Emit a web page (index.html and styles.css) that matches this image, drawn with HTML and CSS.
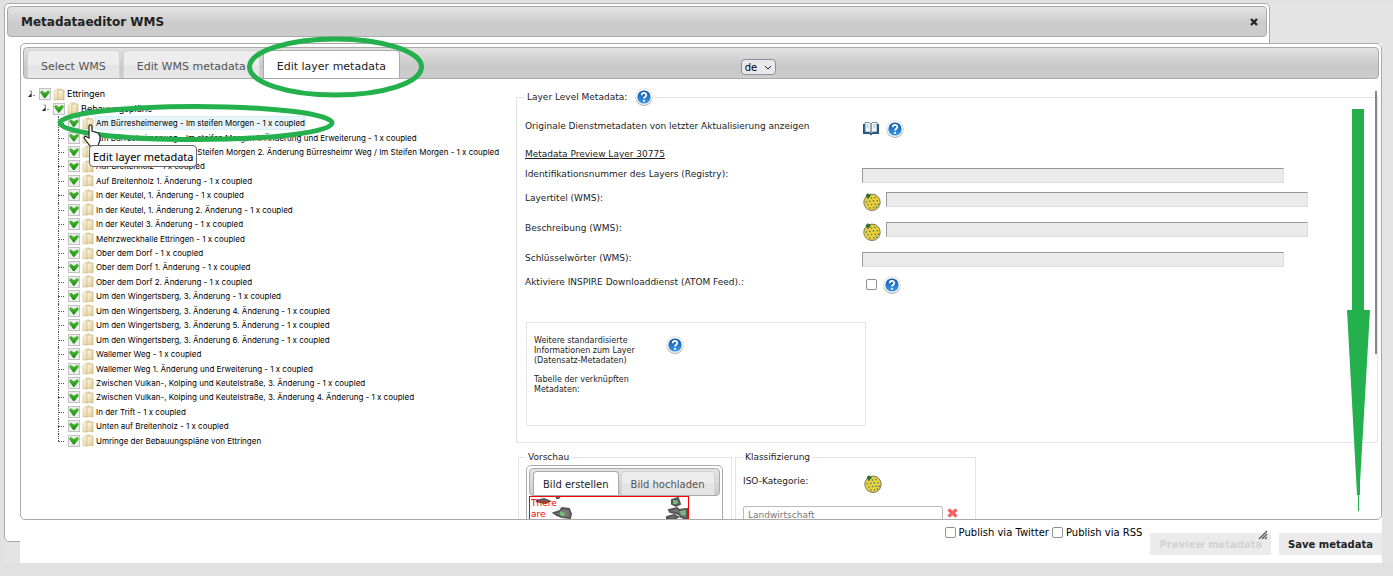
FILE: index.html
```html
<!DOCTYPE html>
<html lang="de">
<head>
<meta charset="utf-8">
<title>Metadataeditor WMS</title>
<link rel="stylesheet" href="styles.css">
</head>
<body>
<svg class="defs" aria-hidden="true">
  <defs>
    <linearGradient id="blue" x1="0" y1="0" x2="0" y2="1"><stop offset="0" stop-color="#0c55a8"/><stop offset="1" stop-color="#3f9aea"/></linearGradient>
    <linearGradient id="paper" x1="0" y1="0" x2="1" y2="1"><stop offset="0" stop-color="#fffbea"/><stop offset="1" stop-color="#dcc78f"/></linearGradient>
    <symbol id="help" viewBox="0 0 18 18">
      <circle cx="9" cy="9.4" r="8.5" fill="#aaa"/><circle cx="9" cy="8.8" r="8.5" fill="#dedede"/><circle cx="9" cy="8.8" r="7.8" fill="#f6f6f6"/>
      <circle cx="9" cy="9" r="6.6" fill="url(#blue)"/>
      <path d="M6.7 7.2C6.7 4.2 11.4 4.3 11.3 7C11.3 8.7 9 8.8 9 10.6" fill="none" stroke="#fff" stroke-width="1.8"/><circle cx="9" cy="12.8" r="1.1" fill="#fff"/>
    </symbol>
    <symbol id="book" viewBox="0 0 18 16">
      <path d="M1 3H17V13H10.5L9 14.5L7.5 13H1Z" fill="#245179"/>
      <path d="M3 1.5H7.5L9 3L10.5 1.5H15V11H10.5L9 12.5L7.5 11H3Z" fill="#f1f3f5" stroke="#547a98" stroke-width=".8"/>
      <path d="M9 3V12" stroke="#48718f" stroke-width="1.2"/><path d="M4.5 4H6.5M4.5 6H6.5M11.5 4H13.5M11.5 6H13.5" stroke="#aab5bd"/>
    </symbol>
    <symbol id="globe" viewBox="0 0 18 18">
      <circle cx="9" cy="9.3" r="8.2" fill="#edcf38" stroke="#77775c" stroke-width="1"/>
      <g fill="#3b7a7e"><circle cx="5" cy="5.4" r=".8"/><circle cx="8.5" cy="5" r=".8"/><circle cx="12" cy="4.5" r=".8"/><circle cx="3.4" cy="9" r=".8"/><circle cx="6.8" cy="8.4" r=".8"/><circle cx="10.4" cy="7.9" r=".8"/><circle cx="14.2" cy="7.8" r=".8"/><circle cx="5" cy="12" r=".8"/><circle cx="8.6" cy="11.5" r=".8"/><circle cx="12.2" cy="11.2" r=".8"/><circle cx="15.2" cy="11.4" r=".8"/><circle cx="7" cy="15" r=".8"/><circle cx="10.6" cy="14.7" r=".8"/><circle cx="13.4" cy="14" r=".8"/></g>
      <path d="M3 2L5 0L6 2L8 1L7 4L5 5L3 4Z" fill="#2c6b2b"/>
    </symbol>
    <symbol id="folder" viewBox="0 0 12 13">
      <path d="M1 4L4 1H8V10L5 12H1Z" fill="url(#paper)" stroke="#d7c38f" stroke-width=".7"/><path d="M5 2H11V12L7 11L5 12Z" fill="url(#paper)" stroke="#c9b37d" stroke-width=".7"/>
    </symbol>
    <symbol id="open" viewBox="0 0 8 9"><path d="M4.500 3V7H1Z" fill="#222"/><path d="M2.500 1H4.500V7M6 5.500H8" fill="none" stroke="#777" stroke-width=".8"/></symbol>
  </defs>
</svg>

<div class="page">
  <section class="dialog">
    <header class="titlebar"><h1>Metadataeditor WMS</h1>
      <button class="close" type="button" aria-label="Close"><svg viewBox="0 0 8 8" width="8" height="8"><path d="M1 1L7 7M7 1L1 7" stroke="#222" stroke-width="2.3"/></svg></button>
    </header>
    <main class="content">
      <div class="tabs">
        <nav class="tabbar">
          <a class="tab" href="#select">Select WMS</a>
          <a class="tab" href="#wms">Edit WMS metadata</a>
          <a class="tab active" href="#layer">Edit layer metadata</a>
          <select class="lang" aria-label="Language"><option>de</option></select>
        </nav>
        <div class="panel">
          <ul class="tree">
            <li class="l1"><svg class="arrow"><use href="#open"/></svg><label><input type="checkbox" checked><svg class="folder"><use href="#folder"/></svg><span>Ettringen</span></label></li>
            <li class="l2"><svg class="arrow"><use href="#open"/></svg><label><input type="checkbox" checked><svg class="folder"><use href="#folder"/></svg><span>Bebauungspläne</span></label></li>
            <li class="l3 hover"><label><input type="checkbox" checked><svg class="folder"><use href="#folder"/></svg><span>Am Bürresheimerweg - Im steifen Morgen - 1 x coupled</span></label></li>
            <li class="l3"><label><input type="checkbox" checked><svg class="folder"><use href="#folder"/></svg><span>Am Bürresheimerweg - Im steifen Morgen 1. Änderung und Erweiterung - 1 x coupled</span></label></li>
            <li class="l3"><label><input type="checkbox" checked><svg class="folder"><use href="#folder"/></svg><span>Am Bürresheimerweg - Im Steifen Morgen 2. Änderung Bürresheimr Weg / Im Steifen Morgen - 1 x coupled</span></label></li>
            <li class="l3"><label><input type="checkbox" checked><svg class="folder"><use href="#folder"/></svg><span>Auf Breitenholz - 1 x coupled</span></label></li>
            <li class="l3"><label><input type="checkbox" checked><svg class="folder"><use href="#folder"/></svg><span>Auf Breitenholz 1. Änderung - 1 x coupled</span></label></li>
            <li class="l3"><label><input type="checkbox" checked><svg class="folder"><use href="#folder"/></svg><span>In der Keutel, 1. Änderung - 1 x coupled</span></label></li>
            <li class="l3"><label><input type="checkbox" checked><svg class="folder"><use href="#folder"/></svg><span>In der Keutel, 1. Änderung 2. Änderung - 1 x coupled</span></label></li>
            <li class="l3"><label><input type="checkbox" checked><svg class="folder"><use href="#folder"/></svg><span>In der Keutel 3. Änderung - 1 x coupled</span></label></li>
            <li class="l3"><label><input type="checkbox" checked><svg class="folder"><use href="#folder"/></svg><span>Mehrzweckhalle Ettringen - 1 x coupled</span></label></li>
            <li class="l3"><label><input type="checkbox" checked><svg class="folder"><use href="#folder"/></svg><span>Ober dem Dorf - 1 x coupled</span></label></li>
            <li class="l3"><label><input type="checkbox" checked><svg class="folder"><use href="#folder"/></svg><span>Ober dem Dorf 1. Änderung - 1 x coupled</span></label></li>
            <li class="l3"><label><input type="checkbox" checked><svg class="folder"><use href="#folder"/></svg><span>Ober dem Dorf 2. Änderung - 1 x coupled</span></label></li>
            <li class="l3"><label><input type="checkbox" checked><svg class="folder"><use href="#folder"/></svg><span>Um den Wingertsberg, 3. Änderung - 1 x coupled</span></label></li>
            <li class="l3"><label><input type="checkbox" checked><svg class="folder"><use href="#folder"/></svg><span>Um den Wingertsberg, 3. Änderung 4. Änderung - 1 x coupled</span></label></li>
            <li class="l3"><label><input type="checkbox" checked><svg class="folder"><use href="#folder"/></svg><span>Um den Wingertsberg, 3. Änderung 5. Änderung - 1 x coupled</span></label></li>
            <li class="l3"><label><input type="checkbox" checked><svg class="folder"><use href="#folder"/></svg><span>Um den Wingertsberg, 3. Änderung 6. Änderung - 1 x coupled</span></label></li>
            <li class="l3"><label><input type="checkbox" checked><svg class="folder"><use href="#folder"/></svg><span>Wallemer Weg - 1 x coupled</span></label></li>
            <li class="l3"><label><input type="checkbox" checked><svg class="folder"><use href="#folder"/></svg><span>Wallemer Weg 1. Änderung und Erweiterung - 1 x coupled</span></label></li>
            <li class="l3"><label><input type="checkbox" checked><svg class="folder"><use href="#folder"/></svg><span>Zwischen Vulkan-, Kolping und Keutelstraße, 3. Änderung - 1 x coupled</span></label></li>
            <li class="l3"><label><input type="checkbox" checked><svg class="folder"><use href="#folder"/></svg><span>Zwischen Vulkan-, Kolping und Keutelstraße, 3. Änderung 4. Änderung - 1 x coupled</span></label></li>
            <li class="l3"><label><input type="checkbox" checked><svg class="folder"><use href="#folder"/></svg><span>In der Trift - 1 x coupled</span></label></li>
            <li class="l3"><label><input type="checkbox" checked><svg class="folder"><use href="#folder"/></svg><span>Unten auf Breitenholz - 1 x coupled</span></label></li>
            <li class="l3 last"><label><input type="checkbox" checked><svg class="folder"><use href="#folder"/></svg><span>Umringe der Bebauungspläne von Ettringen</span></label></li>
          </ul>
          <form class="form">
            <fieldset class="layer">
              <legend>Layer Level Metadata: <svg class="icon"><use href="#help"/></svg></legend>
              <div class="row original"><span>Originale Dienstmetadaten von letzter Aktualisierung anzeigen</span><div class="ctl"><svg class="icon"><use href="#book"/></svg><svg class="icon"><use href="#help"/></svg></div></div>
              <div class="row preview"><a href="#preview">Metadata Preview Layer 30775</a></div>
              <div class="row"><label for="reg">Identifikationsnummer des Layers (Registry):</label><div class="ctl"><input class="field" id="reg" type="text" readonly></div></div>
              <div class="row tall"><label for="title">Layertitel (WMS):</label><div class="ctl"><svg class="icon"><use href="#globe"/></svg><input class="field" id="title" type="text" readonly></div></div>
              <div class="row tall"><label for="desc">Beschreibung (WMS):</label><div class="ctl"><svg class="icon"><use href="#globe"/></svg><input class="field" id="desc" type="text" readonly></div></div>
              <div class="row"><label for="keys">Schlüsselwörter (WMS):</label><div class="ctl"><input class="field" id="keys" type="text" readonly></div></div>
              <div class="row atom"><label for="atom">Aktiviere INSPIRE Downloaddienst (ATOM Feed).:</label><div class="ctl"><input class="box" id="atom" type="checkbox"><svg class="icon"><use href="#help"/></svg></div></div>
              <div class="linked">
                <div class="notes"><p>Weitere standardisierte Informationen zum Layer (Datensatz-Metadaten)</p><p>Tabelle der verknüpften Metadaten:</p></div>
                <svg class="icon"><use href="#help"/></svg>
              </div>
            </fieldset>
            <div class="lower">
              <fieldset class="preview-set">
                <legend>Vorschau</legend>
                <div class="minitabs">
                  <nav class="minibar"><a class="minitab active" href="#create">Bild erstellen</a><a class="minitab" href="#upload">Bild hochladen</a></nav>
                  <div class="map">
                    <svg viewBox="0 0 158 40" width="158" height="40" aria-hidden="true">
                      <g fill="#777" stroke="#555" stroke-width="2"><path d="M6 4L14 2L19 4L15 6Z"/><path d="M26 1L30 0L28 1Z"/><path d="M24 16L30 14L32 11L39 12L41 17L40 21L32 20L27 18Z"/><path d="M142 3L148 1L150 7L146 9L142 7Z"/><path d="M137 20L144 18L148 20L144 22H137Z"/><path d="M149 13L157 12V22L151 20L149 17L140 15L139 13L147 11Z"/></g>
                      <g fill="#73bd79"><path d="M30 14L35 16L34 20L30 18Z"/><path d="M143 3L148 4L147 7L143 7Z"/><path d="M150 14L156 13V18L151 18Z"/></g>
                    </svg>
                    <span>There<br>are</span>
                  </div>
                </div>
              </fieldset>
              <fieldset class="class-set">
                <legend>Klassifizierung</legend>
                <div class="iso"><label for="iso">ISO-Kategorie:</label><svg class="icon"><use href="#globe"/></svg></div>
                <div class="category"><input id="iso" type="text" value="Landwirtschaft"><button type="button" aria-label="Remove"><svg viewBox="0 0 11 10" width="11" height="10"><path d="M1.5 1.5L9.5 8.5M9.5 1.5L1.5 8.5" stroke="#f95d5d" stroke-width="3.2"/></svg></button></div>
              </fieldset>
            </div>
          </form>
          <div class="scroll"></div>
        </div>
      </div>
      <footer class="footer">
        <div class="publish"><input class="box" id="tw" type="checkbox"><label for="tw">Publish via Twitter</label><input class="box" id="rss" type="checkbox"><label for="rss">Publish via RSS</label></div>
        <button class="action" type="button" disabled>Preview metadata</button>
        <button class="action" type="button">Save metadata</button>
      </footer>
    </main>
    <svg class="grip" viewBox="0 0 10 10"><path d="M1 9L9 1M4 9L9 4M7 9L9 7" stroke="#555" stroke-width="1.2"/></svg>
  </section>
</div>

<svg class="marks" width="1393" height="576" viewBox="0 0 1393 576" aria-hidden="true">
  <g fill="none" stroke="#24b04d" stroke-width="5"><ellipse cx="335.5" cy="67" rx="86" ry="28"/><ellipse cx="196" cy="123" rx="136" ry="16.5"/></g>
  <path d="M1352 109H1364V310H1370L1360 483V495H1359V511H1358V495H1357L1347 310H1352Z" fill="#24b04d"/>
  <path d="M89 126C90 124 92 125 92 127V131L98 133L100 136V140L98 146H90L84 138L85 136L89 138Z" fill="#fff" stroke="#222" stroke-width="1.2"/>
</svg>
<div class="tip" role="tooltip">Edit layer metadata</div>
</body>
</html>
```
FILE: styles.css
```css
* { box-sizing: border-box; }
body { margin: 0; padding: 3px 0 0 4px; min-height: 576px; background: #e1e1e1; color: #222; font: 9px "DejaVu Sans", Verdana, sans-serif; position: relative; overflow: hidden; }
h1, p, ul { margin: 0; padding: 0; }
a { color: inherit; text-decoration: none; }
svg { flex: none; }
.defs { position: absolute; width: 0; height: 0; }
.page { background: #e4e4e4; padding-bottom: 21px; }
.dialog { position: relative; width: calc(100% - 123px); padding: 2px; background: #fff; border: 1px solid #aaa; border-radius: 5px; }
.titlebar { display: flex; align-items: center; justify-content: space-between; height: 31px; padding: 0 8px 0 13px; border: 1px solid #aaa; border-radius: 4px; background: linear-gradient(#e4e4e4, #ccc 55%, #ccc); }
.titlebar h1 { font: bold 12px "DejaVu Sans", Verdana, sans-serif; }
button { border: 0; padding: 0; background: none; font-family: inherit; }
.close { display: flex; }
.content { position: relative; margin: 6px -115px -24px 13px; background: #fff; }
.tabs { height: 477px; border: 1px solid #aaa; border-radius: 5px; padding: 3px 2px 0; overflow: hidden; }
.tabbar { display: flex; align-items: flex-end; height: 32px; padding-left: 3px; border: 1px solid #aaa; border-radius: 4px; background: linear-gradient(#e2e2e2, #c9c9c9 60%, #ccc); }
.tab { height: 28px; margin-right: 3px; padding: 0 13px; border: 1px solid #d3d3d3; border-bottom: 0; border-radius: 4px 4px 0 0; background: linear-gradient(#ededed 50%, #e4e4e4 50%, #e8e8e8); color: #555; font-size: 11px; line-height: 31px; white-space: nowrap; }
.tab.active { background: #fff; border-color: #aaa; color: #222; }
.lang { appearance: none; width: 35px; height: 16px; margin: 0 0 3px 25%; padding: 0 3px; border: 1px solid #8f8f9d; border-radius: 4px; background: #e9e9ed url("data:image/svg+xml,%3Csvg xmlns='http://www.w3.org/2000/svg' width='6' height='5'%3E%3Cpath d='M0 1L3 4L6 1' fill='none' stroke='%23222'/%3E%3C/svg%3E") no-repeat right 4px center; font: 10px "DejaVu Sans", sans-serif; }
.panel { position: relative; display: flex; padding-top: 7px; }
.tree { display: grid; grid-auto-rows: 1fr; flex: 0 0 493px; height: 361px; margin-top: 1px; padding-left: 4px; list-style: none; color: #000; font: 8px Inter, "DejaVu Sans", sans-serif; }
.tree li { display: flex; align-items: center; min-height: 0; }
.tree label { display: flex; align-items: center; gap: 2px; white-space: nowrap; }
.tree input { appearance: none; width: 12px; height: 12px; margin: 0; border: 1px solid #c2c2c2; background: #efefef; flex: none; }
.tree input::before { content: ""; display: block; width: 10px; height: 9px; background: linear-gradient(#58c43c, #168e0d); clip-path: polygon(0 35%, 18% 12%, 48% 38%, 84% 12%, 100% 35%, 52% 100%, 44% 100%); }
.tree span { line-height: 12px; }
.arrow { width: 8px; height: 9px; }
.folder { width: 12px; height: 13px; }
.l1 { gap: 4px; font-size: 9px; }
.l2 { gap: 4px; padding-left: 14px; font-size: 9px; }
.l3 { margin-left: 31px; position: relative; padding-left: 10px; }
.l3::before { content: ""; position: absolute; left: 0; top: 0; bottom: 0; border-left: 1px dotted #555; }
.l3::after { content: ""; position: absolute; left: 0; top: 50%; width: 6px; border-top: 1px dotted #555; }
.l3.last::before { bottom: 50%; }
.hover span { background: #e7f4f9; box-shadow: 0 0 0 1px #d8f0fa; }
.form { flex: 1; min-width: 0; padding: 2px 1px 0 0; }
fieldset { margin: 0; min-width: 0; border: 1px solid #e4e4e8; }
.layer { padding: 12px 8px 16px; }
legend { padding: 0 2px; height: 12px; line-height: 12px; }
.layer legend { display: flex; align-items: center; gap: 8px; height: 18px; }
.icon { width: 18px; height: 18px; }
.row { display: flex; height: 24px; line-height: 17px; }
.row > :first-child { flex: 0 0 337px; }
.row.original { height: 28px; line-height: 16px; }
.row.preview { height: 20px; }
.row.preview a { flex: none; text-decoration: underline; }
.row.tall { height: 30px; }
.row.tall .icon { margin: 1px 0 0 1px; }
.row.tall .ctl { gap: 5px; }
.row.atom { height: 48px; }
.ctl { display: flex; flex: 1; gap: 6px; padding-top: 2px; }
.field { width: 422px; height: 15px; margin: 0; border: 1px solid; border-color: #999 #ddd #ddd #999; background: #ebebeb; }
.box { appearance: none; flex: none; width: 11px; height: 11px; margin: 0; border: 1px solid #8f8f9d; border-radius: 2px; background: #fff; }
.ctl .box { margin: 3px 0 0 4px; }
.linked { display: flex; align-items: flex-start; gap: 20px; width: 340px; height: 104px; margin-left: 1px; padding: 13px 7px; border: 1px solid #e4e4e8; font-size: 8px; line-height: 10px; }
.notes { width: 112px; }
.notes p { margin-bottom: 9px; }
.lower { display: flex; align-items: flex-start; gap: 3px; padding: 8px 0 0 2px; }
.preview-set { width: 214px; height: 110px; padding: 2px 7px; }
.class-set { width: 241px; height: 110px; padding: 12px 7px; }
.minitabs { width: 197px; height: 90px; border: 1px solid #aaa; border-radius: 5px; padding: 2px; }
.minibar { display: flex; align-items: flex-end; gap: 2px; height: 28px; padding-left: 3px; border: 1px solid #aaa; border-radius: 4px; background: linear-gradient(#e4e4e4, #ccc); }
.minitab { height: 24px; padding: 0 9px; border: 1px solid #d3d3d3; border-bottom: 0; border-radius: 4px 4px 0 0; background: linear-gradient(#ededed 50%, #e4e4e4 50%); color: #555; font-size: 10px; line-height: 25px; white-space: nowrap; }
.minitab.active { background: #fff; border-color: #aaa; color: #222; }
.map { position: relative; width: 160px; height: 50px; border: 1px solid #f00; }
.map span { position: absolute; left: 1px; top: 1px; color: #f00; line-height: 11px; }
.iso { display: flex; height: 31px; line-height: 12px; }
.iso label { width: 121px; }
.category { display: flex; align-items: flex-start; gap: 4px; }
.category input { width: 200px; height: 18px; margin: 0; padding: 0 4px; border: 1px solid #bbb; border-radius: 2px; color: #777; font: 9px "DejaVu Sans", sans-serif; }
.scroll { position: absolute; right: 2px; top: 12px; width: 2px; height: 263px; background: #888; }
.footer { display: flex; align-items: flex-start; justify-content: flex-end; gap: 8px; height: 43px; padding-top: 7px; color: #000; }
.publish { display: flex; align-items: center; gap: 3px; font-size: 10px; line-height: 11px; }
.action { height: 22px; margin-top: 6px; padding: 0 9px; background: #ebebeb; color: #222; font-size: 10px; font-weight: bold; }
.action:disabled { color: #d3d3d3; }
.grip { position: absolute; right: 1px; bottom: 1px; width: 10px; height: 10px; }
.marks { position: absolute; left: 0; top: 0; pointer-events: none; }
.tip { position: absolute; left: 89px; top: 145px; padding: 0 3px; height: 22px; border: 1px solid #666; border-radius: 4px; background: #f9f9fb; color: #000; font: 11px "Noto Sans", "Open Sans", sans-serif; line-height: 21px; }
```
